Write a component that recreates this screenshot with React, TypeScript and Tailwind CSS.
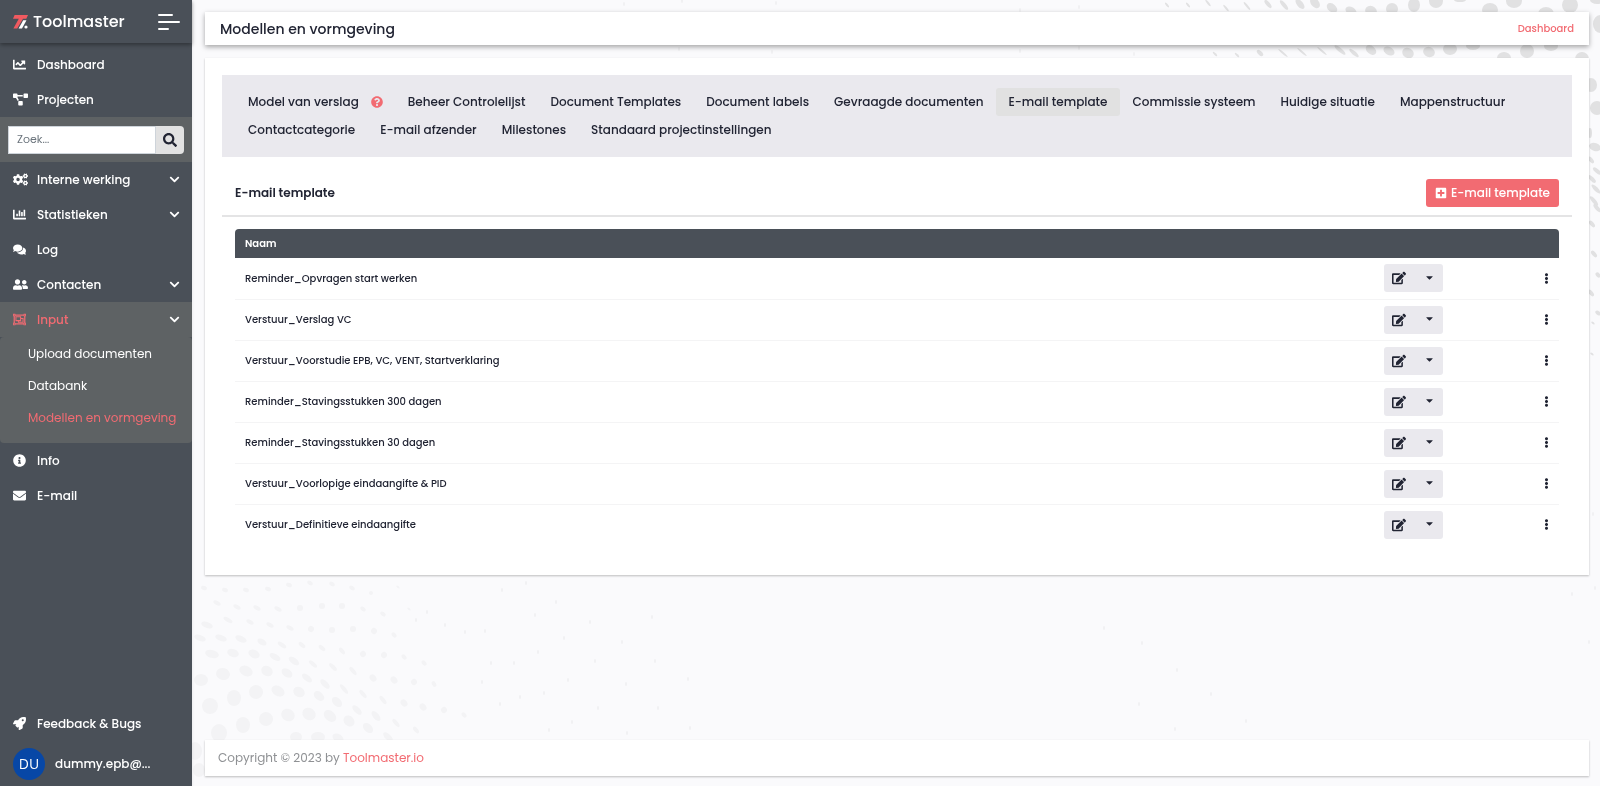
import type { IconType } from 'react-icons';
import {
  FaCaretDown,
  FaChartBar,
  FaChartLine,
  FaChevronDown,
  FaCogs,
  FaComments,
  FaEdit,
  FaEllipsisV,
  FaEnvelope,
  FaInfoCircle,
  FaPlusSquare,
  FaProjectDiagram,
  FaQuestionCircle,
  FaRegObjectGroup,
  FaRocket,
  FaSearch,
  FaUserFriends,
} from 'react-icons/fa';

interface NavEntry {
  label: string;
  icon: IconType;
  expandable?: boolean;
}

const topNav: NavEntry[] = [
  { label: 'Dashboard', icon: FaChartLine },
  { label: 'Projecten', icon: FaProjectDiagram },
];

const mainNav: NavEntry[] = [
  { label: 'Interne werking', icon: FaCogs, expandable: true },
  { label: 'Statistieken', icon: FaChartBar, expandable: true },
  { label: 'Log', icon: FaComments },
  { label: 'Contacten', icon: FaUserFriends, expandable: true },
];

const inputNav = ['Upload documenten', 'Databank', 'Modellen en vormgeving'];

const tabs = [
  'Model van verslag',
  'Beheer Controlelijst',
  'Document Templates',
  'Document labels',
  'Gevraagde documenten',
  'E-mail template',
  'Commissie systeem',
  'Huidige situatie',
  'Mappenstructuur',
  'Contactcategorie',
  'E-mail afzender',
  'Milestones',
  'Standaard projectinstellingen',
];

const templates = [
  'Reminder_Opvragen start werken',
  'Verstuur_Verslag VC',
  'Verstuur_Voorstudie EPB, VC, VENT, Startverklaring',
  'Reminder_Stavingsstukken 300 dagen',
  'Reminder_Stavingsstukken 30 dagen',
  'Verstuur_Voorlopige eindaangifte & PID',
  'Verstuur_Definitieve eindaangifte',
];

// Halftone dots: x, y, rx, ry, rotation
const leftDots = [
  [204, 588, 3, 2, 20], [225, 590, 3, 2, 20], [246, 590, 3, 2, 20], [268, 589, 3, 2, 20], [289, 585, 3, 2, 20],
  [310, 583, 3, 2, 30], [332, 584, 3, 2, 30], [352, 588, 3, 2, 30], [371, 593, 2, 2, 0], [398, 587, 2, 1, 40],
  [217, 603, 4, 2, 30], [237, 607, 4, 2, 30], [257, 608, 4, 2, 30], [278, 609, 4, 2, 30], [300, 608, 3, 3, 0],
  [322, 606, 3, 3, 0], [342, 606, 3, 3, 0], [363, 609, 3, 2, 40], [383, 614, 3, 2, 40], [409, 609, 2, 1, 40],
  [207, 625, 6, 3, 20], [228, 620, 5, 2, 30], [250, 622, 4, 2, 30], [270, 625, 4, 2, 30], [290, 628, 4, 2, 30],
  [311, 629, 3, 3, 30], [332, 630, 3, 3, 0], [353, 629, 3, 3, 0], [374, 631, 3, 3, 40], [394, 635, 3, 2, 50],
  [200, 638, 6, 3, 20], [221, 638, 6, 3, 20], [241, 639, 6, 3, 25], [262, 642, 5, 3, 30], [282, 645, 5, 2, 35],
  [302, 645, 4, 2, 40], [322, 648, 4, 2, 40], [342, 651, 4, 2, 50], [363, 654, 3, 3, 50], [384, 655, 3, 3, 50],
  [404, 657, 3, 2, 50], [424, 663, 3, 2, 50], [212, 654, 7, 4, 15], [233, 653, 6, 4, 20], [254, 654, 6, 4, 25],
  [275, 657, 6, 3, 30], [294, 661, 6, 3, 35], [313, 664, 5, 2, 40], [333, 667, 5, 2, 45], [353, 671, 5, 2, 50],
  [373, 678, 4, 3, 50], [394, 680, 4, 3, 50], [414, 682, 3, 3, 50], [434, 684, 3, 2, 60], [201, 680, 7, 6, 0],
  [223, 674, 7, 6, 15], [246, 671, 7, 5, 25], [267, 671, 6, 5, 30], [287, 673, 6, 4, 35], [307, 678, 6, 3, 40],
  [325, 684, 6, 3, 45], [344, 689, 6, 2, 50], [363, 694, 5, 2, 50], [383, 700, 5, 2, 50], [404, 703, 4, 3, 50],
  [423, 707, 4, 3, 50], [444, 710, 3, 3, 50], [464, 715, 3, 2, 50], [210, 706, 8, 8, 0], [234, 698, 7, 8, 0],
  [256, 692, 7, 7, 20], [278, 691, 7, 5, 30], [299, 692, 6, 5, 35], [319, 696, 6, 4, 40], [337, 702, 6, 4, 45],
  [357, 710, 6, 3, 45], [376, 716, 6, 3, 50], [396, 723, 5, 2, 50], [416, 730, 4, 2, 50], [219, 733, 8, 9, 0],
  [243, 725, 7, 8, 0], [266, 719, 7, 7, 20], [288, 715, 7, 6, 30], [309, 714, 7, 6, 35], [330, 716, 7, 5, 40],
  [349, 721, 6, 5, 45], [368, 728, 6, 4, 45], [388, 737, 6, 3, 45], [296, 737, 6, 5, 0], [318, 737, 7, 5, 0],
  [338, 738, 6, 4, 30], [195, 751, 7, 9, 0], [199, 770, 6, 7, 0],
];

const rightDots = [
  [1167, 5, 3, 1, 50], [1188, 5, 3, 1, 50], [1208, 3, 4, 1, 50], [1226, 8, 4, 1, 50], [1247, 6, 5, 1, 50],
  [1268, 4, 5, 2, 50], [1284, 5, 6, 2, 50], [1300, 4, 6, 3, 50], [1315, 3, 6, 4, 50], [1332, 8, 6, 4, 40],
  [1351, 11, 6, 4, 30], [1371, 11, 6, 5, 20], [1392, 9, 6, 6, 0], [1414, 5, 6, 7, 0], [1436, 1, 7, 7, 0],
  [1460, 0, 6, 2, 0], [1490, 10, 8, 7, 0], [1514, 1, 8, 7, 0], [1546, 14, 8, 7, 0], [1570, 5, 8, 8, 0],
  [1597, 0, 7, 4, 0], [1600, 24, 7, 9, 0], [1215, 54, 3, 1, 45], [1237, 55, 3, 1, 45], [1260, 53, 4, 2, 45],
  [1283, 53, 6, 1, 40], [1302, 52, 6, 1, 40], [1322, 51, 6, 1, 40], [1340, 50, 7, 2, 40], [1354, 53, 6, 2, 40],
  [1371, 50, 6, 4, 40], [1389, 51, 6, 4, 30], [1408, 53, 6, 5, 30], [1429, 52, 6, 5, 20], [1450, 49, 7, 6, 0],
  [1473, 46, 7, 4, 0], [1504, 58, 7, 6, 0], [1527, 51, 7, 7, 0], [1551, 46, 7, 5, 0], [1582, 59, 7, 7, 0],
  [1591, 85, 6, 7, 0], [1597, 108, 7, 7, 0], [1590, 133, 2, 5, 0], [1595, 147, 6, 4, 20], [1591, 160, 4, 2, 50],
  [1597, 171, 5, 2, 40], [1592, 179, 5, 2, 45], [1596, 189, 6, 2, 45], [1594, 201, 6, 2, 50], [1597, 208, 5, 2, 50],
  [1592, 224, 4, 2, 50], [1594, 254, 4, 2, 50], [1598, 275, 3, 2, 50], [1591, 293, 4, 2, 50], [1598, 313, 3, 2, 40],
  [1593, 323, 2, 1, 40], [1592, 354, 2, 1, 40],
];

const specks = [
  [624, 4], [682, 1], [776, 3], [1020, 10], [1079, 7], [679, 49], [772, 52], [1020, 51], [1079, 48], [1134, 54],
  [416, 620], [427, 612], [445, 625], [465, 632], [485, 631], [502, 590], [526, 583], [535, 615], [556, 602],
  [564, 638], [538, 652], [514, 663], [491, 663], [482, 682], [544, 693], [568, 680], [595, 661], [590, 622],
  [626, 684], [622, 642], [652, 617], [655, 661], [688, 679], [598, 708], [572, 722], [549, 730], [627, 733],
  [658, 708], [690, 728], [520, 697], [500, 704], [1104, 628], [1142, 643], [1177, 670], [1211, 694], [1246, 721],
  [1139, 704], [1175, 729], [1572, 594], [1595, 588], [1589, 642], [1593, 514],
];

const ACCENT = 'text-[#f26b72]';

// Font Awesome glyphs drawn on the wider 640 unit canvas
const wideIcons: IconType[] = [FaCogs, FaProjectDiagram, FaUserFriends];

function Backdrop() {
  return (
    <svg className="pointer-events-none fixed top-0 left-0 h-[786px] w-[1600px]" viewBox="0 0 1600 786" aria-hidden="true">
      <g fill="#f3f3f5">
        {leftDots.map(([x, y, rx, ry, r]) => (
          <ellipse key={`${x}-${y}`} cx={x} cy={y} rx={rx} ry={ry} transform={`rotate(${r} ${x} ${y})`} />
        ))}
      </g>
      <g fill="#e1e1e2">
        {rightDots.map(([x, y, rx, ry, r]) => (
          <ellipse key={`${x}-${y}`} cx={x} cy={y} rx={rx} ry={ry} transform={`rotate(${r} ${x} ${y})`} />
        ))}
      </g>
      <g fill="#f0f0f2">
        {specks.map(([x, y]) => (
          <ellipse key={`${x}-${y}`} cx={x} cy={y} rx="1" ry="2" />
        ))}
      </g>
    </svg>
  );
}

function NavItem({ item, active = false }: { item: NavEntry; active?: boolean }) {
  const Icon = item.icon;
  return (
    <a
      href="#"
      className={`flex h-[35px] items-center pr-3 pl-[13px] text-xs font-medium ${
        active ? 'bg-[#5e6264] text-[#f26b72]' : 'text-white'
      }`}
    >
      <span className="flex w-6 items-center">
        <Icon size={wideIcons.includes(Icon) ? 15 : 13} />
      </span>
      <span className="flex-1">{item.label}</span>
      {item.expandable && <FaChevronDown size={11} className="text-white" />}
    </a>
  );
}

function Sidebar() {
  return (
    <aside className="relative flex w-48 shrink-0 flex-col bg-[#4a5058] shadow">
      <div className="mb-1 flex h-[43px] items-center justify-between pr-3 pl-[13px] shadow-[0_2px_4px_rgba(0,0,0,0.35)]">
        <a href="#" className="flex items-center gap-[5px] text-base font-medium text-white">
          <svg width="15" height="14" viewBox="0 0 15 14" aria-hidden="true">
            <path d="M1.6 0H15l-1.7 3.8H10L4.2 13.6H.4L5.8 3.8H0z" fill="#f05a60" />
            <path d="M10.2 5.2h3.3L9 13.6H5.6z" fill="#fff" />
            <circle cx="13" cy="12" r="1.6" fill="#fff" />
          </svg>
          Toolmaster
        </a>
        <button type="button" aria-label="Menu" className="text-white">
          <svg width="22" height="16" viewBox="0 0 22 16" stroke="currentColor" strokeWidth="2" strokeLinecap="round" aria-hidden="true">
            <path d="M1 1h13M1 8h20M1 15h9" />
          </svg>
        </button>
      </div>

      <nav>
        {topNav.map((item) => (
          <NavItem key={item.label} item={item} />
        ))}
      </nav>

      <form className="flex h-[45px] items-center bg-[#5e6264] px-2">
        <input
          type="text"
          aria-label="Zoek"
          placeholder="Zoek..."
          className="h-7 min-w-0 flex-1 border border-[#ced4da] bg-white px-2 text-[11px] text-gray-700 placeholder:text-[#6c757d]"
        />
        <button
          type="button"
          aria-label="Zoeken"
          className="flex h-7 w-7 items-center justify-center rounded-r-sm bg-[#e2e2e2] text-[#212433]"
        >
          <FaSearch size={14} />
        </button>
      </form>

      <nav>
        {mainNav.map((item) => (
          <NavItem key={item.label} item={item} />
        ))}
        <NavItem item={{ label: 'Input', icon: FaRegObjectGroup, expandable: true }} active />
        <ul className="rounded-sm bg-[#5e6264] pt-px pb-[9px]">
          {inputNav.map((label, i) => (
            <li key={label}>
              <a
                href="#"
                className={`flex h-8 items-center pl-7 text-xs whitespace-nowrap ${i === 2 ? ACCENT : 'text-white'}`}
              >
                {label}
              </a>
            </li>
          ))}
        </ul>
        <NavItem item={{ label: 'Info', icon: FaInfoCircle }} />
        <NavItem item={{ label: 'E-mail', icon: FaEnvelope }} />
      </nav>

      <div className="mt-auto pb-[6px]">
        <NavItem item={{ label: 'Feedback & Bugs', icon: FaRocket }} />
        <a href="#" className="mt-[7px] flex items-center gap-[10px] pl-[13px] text-xs font-medium text-white">
          <span className="flex size-8 items-center justify-center rounded-full bg-[#0747a6] font-['Open_Sans',sans-serif] text-sm font-normal">
            DU
          </span>
          dummy.epb@...
        </a>
      </div>
    </aside>
  );
}

function TemplateRow({ name }: { name: string }) {
  return (
    <tr className="h-[41px] border-b border-[#f4f4f5] last:border-b-0">
      <td className="pl-[10px] text-[10px] font-medium">{name}</td>
      <td>
        <div className="flex h-7 w-[59px] overflow-hidden rounded-[3px] bg-[#eae9ee]">
          <button type="button" aria-label={`Bewerk ${name}`} className="flex w-[30px] items-center justify-center">
            <FaEdit size={14} />
          </button>
          <button type="button" aria-label={`Opties ${name}`} className="flex flex-1 items-center justify-center pb-0.5 pl-0.5">
            <FaCaretDown size={11} />
          </button>
        </div>
      </td>
      <td className="pr-[7px]">
        <button type="button" aria-label={`Meer ${name}`} className="ml-auto flex w-3 justify-center">
          <FaEllipsisV size={11} />
        </button>
      </td>
    </tr>
  );
}

export default function App() {
  return (
    <div className="flex min-h-screen bg-[#fafafc] font-[Poppins,Inter,sans-serif] text-[#212433]">
      <Backdrop />
      <Sidebar />

      <div className="relative flex min-w-0 flex-1 flex-col pt-3 pr-[11px] pb-[10px] pl-[13px]">
        <header className="flex h-[33px] items-center justify-between bg-white px-[15px] shadow-[0_2px_5px_rgba(0,0,0,0.35)]">
          <h1 className="text-sm font-medium">Modellen en vormgeving</h1>
          <a href="#" className={`text-[10px] font-medium ${ACCENT}`}>
            Dashboard
          </a>
        </header>

        <main className="mt-[13px] bg-white px-[17px] pt-[17px] pb-[30px] shadow-[0_1px_2px_rgba(0,0,0,0.25)]">
          <nav className="flex flex-wrap bg-[#eae9ee] py-[13px] pr-3 pl-[14px]">
            {tabs.map((tab) => (
              <a
                key={tab}
                href="#"
                className={`flex h-7 items-center rounded-[3px] pr-[13px] pl-3 text-xs font-medium ${
                  tab === 'E-mail template' ? 'bg-[#e1e1e1]' : ''
                }`}
              >
                {tab}
                {tab === 'Model van verslag' && <FaQuestionCircle size={12} className="ml-3 text-[#f26b72]" />}
              </a>
            ))}
          </nav>

          <div className="flex h-[60px] items-center justify-between border-b-2 border-[#e4e4e5] px-[13px] pt-[13px]">
            <h2 className="text-xs font-semibold">E-mail template</h2>
            <button
              type="button"
              className="flex h-7 items-center gap-1 rounded-[3px] bg-[#f26b72] px-[9px] text-xs font-medium text-white"
            >
              <FaPlusSquare size={12} />
              E-mail template
            </button>
          </div>

          <div className="mt-3 px-[13px]">
            <table className="w-full table-fixed border-collapse">
              <colgroup>
                <col />
                <col className="w-[131px]" />
                <col className="w-11" />
              </colgroup>
              <thead>
                <tr className="h-[29px] text-left text-[10px] text-white">
                  <th className="rounded-tl-[4px] bg-[#4a5058] pl-[10px] font-semibold">Naam</th>
                  <th className="bg-[#4a5058]" />
                  <th className="rounded-tr-[4px] bg-[#4a5058]" />
                </tr>
              </thead>
              <tbody>
                {templates.map((name) => (
                  <TemplateRow key={name} name={name} />
                ))}
              </tbody>
            </table>
          </div>
        </main>

        <footer className="mt-auto flex h-9 items-center bg-white px-[13px] text-xs text-[#8f9194] shadow-[0_1px_2px_rgba(0,0,0,0.25)]">
          <span>
            Copyright © 2023 by{' '}
            <a href="#" className={ACCENT}>
              Toolmaster.io
            </a>
          </span>
        </footer>
      </div>
    </div>
  );
}
